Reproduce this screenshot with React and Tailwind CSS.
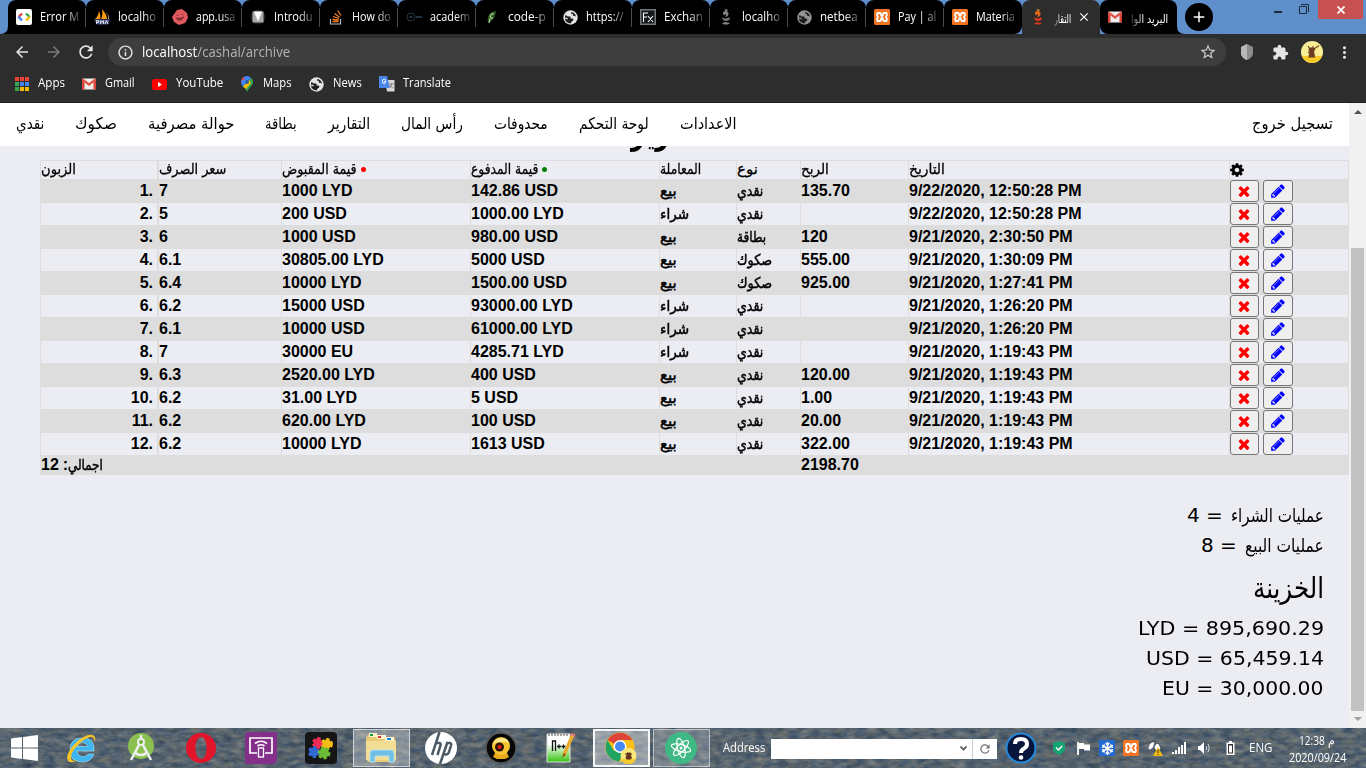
import React, { useLayoutEffect, useRef, useState } from "react";
import { MdArrowBack, MdArrowForward, MdRefresh, MdInfoOutline, MdStarBorder, MdExtension, MdMoreVert, MdClose, MdAdd } from "react-icons/md";
import { FaSnowflake } from "react-icons/fa";

/* Text squeezed or stretched horizontally to a given width. */
function Fit({ w, children, className = "", dir }) {
  const ref = useRef(null);
  const [scale, setScale] = useState(1);
  useLayoutEffect(() => {
    const measure = () => {
      if (ref.current && ref.current.offsetWidth) setScale(w / ref.current.offsetWidth);
    };
    measure();
    if (document.fonts) document.fonts.ready.then(measure);
  }, [w]);
  return (
    <span className={"inline-flex shrink-0 justify-start whitespace-nowrap " + className} style={{ width: w }}>
      <span ref={ref} dir={dir} className="inline-block shrink-0 origin-left whitespace-pre" style={{ transform: `scaleX(${scale})` }}>
        {children}
      </span>
    </span>
  );
}

const CodeIcon = () => (
  <svg viewBox="0 0 16 16" className="h-4 w-4">
    <rect width="16" height="16" rx="2" fill="#fff" />
    <path d="M6 4.5L2.5 8" stroke="#ea4335" strokeWidth="2.4" />
    <path d="M2.3 7.6L6 11.5" stroke="#4285f4" strokeWidth="2.4" />
    <path d="M10 4.5L13.7 8.2" stroke="#34a853" strokeWidth="2.4" />
    <path d="M13.6 7.8L10 11.5" stroke="#fbbc05" strokeWidth="2.4" />
  </svg>
);
const PmaIcon = () => (
  <svg viewBox="0 0 17 16" className="h-4 w-[17px] shrink-0">
    <path d="M1 10Q4 8 5 2Q7 7 6 10z M7 10Q9 6 8 0Q13 6 13 10z" fill="#f89c0e" />
    <path d="M11 3Q15 6 14 10L15 10Q15 5 11 3" fill="#f6c78c" />
    <path d="M0 10.500h16l-2 5H3z" fill="#4c5584" />
    <path d="M2.500 15v-3.500h2v2h-2M6.500 15v-3.500l1.500 2 1.500-2V15M11 15l1.500-3.500L14 15" fill="none" stroke="#d7dae8" strokeWidth="1" />
  </svg>
);
const FaceIcon = () => (
  <svg viewBox="0 0 16 16" className="h-4 w-4">
    <path d="M5 1l5-1 5 4 1 5-3 5-6 2-5-3-2-5z" fill="#e0595f" />
    <path d="M4 9q4 5 8-1q-4 2-8 1M4.500 6.500l2-.5M9.500 5.500l2-.3" fill="#7a2b31" stroke="#7a2b31" strokeWidth=".8" />
  </svg>
);
const IntroIcon = () => (
  <svg viewBox="0 0 16 16" className="h-4 w-4">
    <circle cx="8" cy="8" r="7.500" fill="#222" />
    <path d="M2.500 2.500h11v11h-11z" fill="#a9a9a9" />
    <path d="M4 2.500h8L8 12.500z" fill="#fff" />
  </svg>
);
const StackIcon = () => (
  <svg viewBox="0 0 16 16" className="h-4 w-4">
    <path d="M2.500 10v5h10v-5" fill="none" stroke="#b9bbbd" strokeWidth="1.200" />
    <path d="M4.500 12.500h6M4.500 10.300l6.200.7M5 7.500l6 2M6.500 4.500l5 3.700M9.500 1.500l3.500 5" stroke="#f48024" strokeWidth="1.300" />
  </svg>
);
const AcademyIcon = () => (
  <svg viewBox="0 0 17 16" className="h-4 w-[17px] shrink-0">
    <circle cx="5" cy="8" r="4" fill="none" stroke="#233743" />
    <path d="M3.500 8h3M10 8h6" stroke="#2c4656" strokeWidth="1.500" />
  </svg>
);
const LeafIcon = () => (
  <svg viewBox="0 0 16 16" className="h-4 w-4">
    <path d="M12 2Q5 3 4 8t1 5Q11 11 12 2z" fill="#2d5b1b" />
    <path d="M10 5Q7 4 6.500 7T9 9M5 14l1-4" fill="none" stroke="#a8c79a" strokeWidth="1.300" />
  </svg>
);
const FxIcon = () => (
  <svg viewBox="0 0 16 16" className="h-4 w-4">
    <rect x=".75" y=".75" width="14.500" height="14.500" fill="#15181a" stroke="#70787e" strokeWidth="1.500" />
    <path d="M3.500 13V4H8M3.500 8H7M8 7l5 6M13 7l-5 6" fill="none" stroke="#fff" strokeWidth="1.100" />
  </svg>
);
/* Chrome's default page globe. */
const Globe = ({ color = "#e4e4e4" }) => (
  <svg viewBox="0 0 16 16" className="h-[15px] w-[15px]">
    <circle cx="8" cy="8" r="7.700" fill={color} />
    <path d="M2 8q0-2 1-3 1 2 3 2h2v2h2q1 0 1 1.500T9.500 12L8 14.300Q3 14 2 9l3 1v-1.500zM9 2q4 .8 5 5l-2-1h-1.500V4H8.500z" fill="#1c1c1c" />
  </svg>
);
const FlameIcon = ({ gray }) => (
  <svg viewBox="0 0 16 16" className="h-4 w-4">
    <path d="M5 3l5-2-1 2q2 0 1.500 2T9 7.500L7 8q2-2 1-3L6 6.500Q5 5 5 3z" fill={gray ? "#858585" : "#e86a17"} />
    <path d="M4 8q1.500 2 4 1.500l4-1q0 3-3.500 3.500Q4 12 4 8z" fill={gray ? "#777" : "#e8371e"} />
    <path d="M4 14.500l3-1.500 5 1-2 1.500H6z" fill={gray ? "#858585" : "#c8381c"} />
    <path d="M6.500.5h3L8 2z" fill={gray ? "#ccc" : "#ffb52b"} />
  </svg>
);
const XamppIcon = () => (
  <svg viewBox="0 0 16 16" className="h-4 w-4 shrink-0">
    <rect width="16" height="16" rx="1.500" fill="#f37423" />
    <path d="M3.500 4h2.200Q7 4 7 5.500T8 7q1 0 1-1.500T10.300 4h2.200q1.200 2-.5 4 1.700 2 .5 4h-2.200Q9 12 9 10.500T8 9q-1 0-1 1.500T5.700 12H3.500q-1.200-2 .5-4-1.700-2-.5-4z" fill="none" stroke="#fff" strokeWidth="1.900" strokeLinejoin="round" />
  </svg>
);
const GmailIcon = () => (
  <svg viewBox="0 0 16 16" className="h-4 w-4">
    <rect x="1" y="2.500" width="14" height="11" rx="1" fill="#eee" />
    <path d="M1 13.500V3.500L3.500 5v8.500zM15 13.500V3.500L12.500 5v8.500z" fill="#d94337" />
    <path d="M1 3q0-.5 1-.5L8 7l6-4.500q1 0 1 .5v1.500L8 10 1 4.500z" fill="#e25549" />
  </svg>
);

const tabs = [
  [CodeIcon, "Error M", 39],
  [PmaIcon, "localho", 38],
  [FaceIcon, "app.usa", 39],
  [IntroIcon, "Introdu", 39],
  [StackIcon, "How do", 39],
  [AcademyIcon, "academ", 40],
  [LeafIcon, "code-p", 38],
  [Globe, "https://", 38],
  [FxIcon, "Exchan", 39],
  [() => <FlameIcon gray />, "localho", 38],
  [() => <Globe color="#949494" />, "netbea", 38],
  [XamppIcon, "Pay | al", 38],
  [XamppIcon, "Materia", 39],
];

function TabStrip() {
  return (
    <div className="relative flex h-[34px] shrink-0 bg-[#5f8fcb] pl-2">
      <svg className="absolute bottom-0 left-0 h-2 w-2" viewBox="0 0 8 8"><path d="M8 0v8H0Q8 8 8 0" fill="#000" /></svg>
      {tabs.map(([Icon, text, w], i) => (
        <div key={i} className={"flex h-[34px] w-[78px] shrink-0 bg-black pl-[8px] " + (i === 12 ? "rounded-t-lg rounded-br-lg" : "rounded-t-lg")}>
          <div className="flex h-[34px] w-4 shrink-0 items-center justify-center"><Icon /></div>
          <div className="ml-2 h-[34px] w-10 [mask-image:linear-gradient(to_right,black_62%,rgba(0,0,0,0.2)_100%)]">
            <Fit w={w} className="text-[12.500px] leading-[33px] text-white">{text}</Fit>
          </div>
          {i < 12 && <div className="mt-[8px] ml-auto h-[19px] w-px bg-[#4c4c4c]" />}
        </div>
      ))}
      <div className="flex h-[34px] w-[78px] shrink-0 items-center rounded-t-lg bg-[#2d2d2d] pl-2">
        <FlameIcon />
        <div className="ml-[8px] [mask-image:linear-gradient(to_left,black_62%,rgba(0,0,0,0.2)_100%)]">
          <Fit w={17} dir="rtl" className="font-['DejaVu_Sans'] text-[12px] text-white">التقار</Fit>
        </div>
        <MdClose className="ml-[6px] h-[14px] w-[14px] text-white" />
      </div>
      <div className="flex h-[34px] w-[77px] shrink-0 items-center rounded-t-lg rounded-bl-lg bg-black pl-[7px]">
        <GmailIcon />
        <div className="ml-2 [mask-image:linear-gradient(to_left,black_65%,rgba(0,0,0,0.2)_100%)]">
          <Fit w={37} dir="rtl" className="font-['DejaVu_Sans'] text-[12px] text-white">البريد الوا</Fit>
        </div>
      </div>
      <svg className="mt-[26px] h-2 w-2 shrink-0" viewBox="0 0 8 8"><path d="M0 0v8h8Q0 8 0 0" fill="#000" /></svg>
      <div className="mt-[3px] flex h-7 w-7 shrink-0 items-center justify-center rounded-full bg-black">
        <MdAdd className="h-[18px] w-[18px] text-white" />
      </div>
      <div className="mt-[11px] ml-[61px] h-[2px] w-2 shrink-0 bg-[#1d2a3a]" />
      <svg viewBox="0 0 10 10" className="mt-1 ml-[17px] h-[10px] w-[10px] shrink-0"><path d="M.5 2.500h7v7h-7zM2 .5h7.500V8" fill="none" stroke="#1d2a3a" /></svg>
      <div className="ml-[9px] flex h-[19px] w-[45px] shrink-0 items-center justify-center bg-[#c75050]">
        <svg viewBox="0 0 8 8" className="h-2 w-2"><path d="M.5.5l7 7M7.500.5l-7 7" stroke="#fff" strokeWidth="1.700" /></svg>
      </div>
    </div>
  );
}

function Toolbar() {
  return (
    <div className="flex h-[36px] shrink-0 items-center bg-[#2d2d2d] pl-[13px] text-[#e6e6e6]">
      <MdArrowBack className="h-[18px] w-[18px] shrink-0" />
      <MdArrowForward className="ml-[14px] h-[18px] w-[18px] shrink-0 text-[#7c7c7c]" />
      <MdRefresh className="ml-[13px] h-5 w-5 shrink-0" />
      <div className="ml-3 flex h-7 w-[1118px] shrink-0 items-center rounded-full bg-[#3e3e3e] pl-[9px]">
        <MdInfoOutline className="h-[17px] w-[17px]" />
        <Fit w={148} className="ml-2 text-[14px] leading-7 text-[#b4b4b4]"><span className="text-white">localhost</span>/cashal/archive</Fit>
        <MdStarBorder className="mr-[9px] ml-auto h-[18px] w-[18px] text-[#ccc]" />
      </div>
      <svg viewBox="0 0 14 16" className="ml-[14px] h-4 w-[14px] shrink-0"><path d="M7 0l6 3v7q-1 4-6 6-5-2-6-6V3z" fill="#8c8c8c" /><path d="M7 0v16q-5-2-6-6V3z" fill="#b7b7b7" /></svg>
      <MdExtension className="ml-[18px] h-[17px] w-[17px] shrink-0" />
      <svg viewBox="0 0 22 22" className="ml-[12px] h-[22px] w-[22px] shrink-0">
        <circle cx="11" cy="11" r="11" fill="#f9ee96" />
        <path d="M.8 15h20.400A11 11 0 01.8 15" fill="#f7c928" />
        <path d="M8.500 7h4l1 2-1 1 1 6H8l1-6-1-1zM7 11l2 1M13 8l5-3.500M7 5l2 3M12 5v3" fill="#6c3d22" stroke="#6c3d22" strokeWidth="1.100" />
      </svg>
      <MdMoreVert className="ml-[12px] h-[19px] w-[19px] shrink-0" />
    </div>
  );
}

const gridColors = ["#ea4335", "#ea4335", "#ea4335", "#34a853", "#4285f4", "#4285f4", "#34a853", "#fbbc05", "#fbbc05"];
function Bookmarks() {
  const t = "mt-[-2px] text-[12px] text-white";
  return (
    <div className="flex h-[33px] shrink-0 items-start border-b border-[#1d1d1d] bg-[#2d2d2d] pl-[15px]">
      <div className="flex h-[28px] items-center">
        <div className="grid grid-cols-3 gap-x-[1px] gap-y-[1px]">{gridColors.map((c, i) => <span key={i} className="h-[4px] w-[4px]" style={{ background: c }} />)}</div>
        <Fit w={27} className={"ml-[9px] " + t}>Apps</Fit>
        <div className="ml-4"><GmailIcon /></div>
        <Fit w={30} className={"ml-2 " + t}>Gmail</Fit>
        <svg viewBox="0 0 15 11" className="ml-[17px] h-[11px] w-[15px]"><rect width="15" height="11" rx="2.500" fill="#f00" /><path d="M6 3l4 2.500L6 8z" fill="#fff" /></svg>
        <Fit w={47} className={"ml-[9px] " + t}>YouTube</Fit>
        <svg viewBox="0 0 12 16" className="ml-[18px] h-4 w-3">
          <path d="M6 0a6 6 0 00-6 6q0 2 2 5l8-9Q8.500 0 6 0" fill="#4285f4" />
          <path d="M10.500 2Q12 4 12 6q0 2-3 5.500Q6.500 14 6 16 5.500 13 2 10.500z" fill="#34a853" />
          <path d="M2 10.800L8 4l2 3-5 6z" fill="#fbbc04" /><path d="M0 5l2-4 2 2z" fill="#ea4335" /><circle cx="6" cy="6" r="2" fill="#2a5ba8" />
        </svg>
        <Fit w={29} className={"ml-[10px] " + t}>Maps</Fit>
        <div className="ml-[17px]"><Globe /></div>
        <Fit w={29} className={"ml-[9px] " + t}>News</Fit>
        <svg viewBox="0 0 16 16" className="ml-[17px] h-4 w-4">
          <path d="M6 4h9.500v11.500H8z" fill="#d7d7d7" /><path d="M0 0h8l3 12H0z" fill="#4a86e8" />
          <path d="M7 4.500q-1.500-2-3-.8T4 7t3-1.300H5" fill="none" stroke="#fff" />
          <path d="M10 8h5M12.500 7v1q0 2-2 4M11 9q1 2 3 3" fill="none" stroke="#777" strokeWidth=".8" />
        </svg>
        <Fit w={48} className={"ml-2 " + t}>Translate</Fit>
      </div>
    </div>
  );
}

const navItems = [["نقدي", 28], ["صكوك", 42], ["حوالة مصرفية", 86], ["بطاقة", 32], ["التقارير", 42], ["رأس المال", 62], ["محدوفات", 54], ["لوحة التحكم", 70], ["الاعدادات", 57]];

const rows = [
  ["1.", "7", "1000 LYD", "142.86 USD", "بيع", "نقدي", "135.70", "9/22/2020, 12:50:28 PM"],
  ["2.", "5", "200 USD", "1000.00 LYD", "شراء", "نقدي", "", "9/22/2020, 12:50:28 PM"],
  ["3.", "6", "1000 USD", "980.00 USD", "بيع", "بطاقة", "120", "9/21/2020, 2:30:50 PM"],
  ["4.", "6.1", "30805.00 LYD", "5000 USD", "بيع", "صكوك", "555.00", "9/21/2020, 1:30:09 PM"],
  ["5.", "6.4", "10000 LYD", "1500.00 USD", "بيع", "صكوك", "925.00", "9/21/2020, 1:27:41 PM"],
  ["6.", "6.2", "15000 USD", "93000.00 LYD", "شراء", "نقدي", "", "9/21/2020, 1:26:20 PM"],
  ["7.", "6.1", "10000 USD", "61000.00 LYD", "شراء", "نقدي", "", "9/21/2020, 1:26:20 PM"],
  ["8.", "7", "30000 EU", "4285.71 LYD", "شراء", "نقدي", "", "9/21/2020, 1:19:43 PM"],
  ["9.", "6.3", "2520.00 LYD", "400 USD", "بيع", "نقدي", "120.00", "9/21/2020, 1:19:43 PM"],
  ["10.", "6.2", "31.00 LYD", "5 USD", "بيع", "نقدي", "1.00", "9/21/2020, 1:19:43 PM"],
  ["11.", "6.2", "620.00 LYD", "100 USD", "بيع", "نقدي", "20.00", "9/21/2020, 1:19:43 PM"],
  ["12.", "6.2", "10000 LYD", "1613 USD", "بيع", "نقدي", "322.00", "9/21/2020, 1:19:43 PM"],
];
const arW = { "بيع": 17, "شراء": 29, "نقدي": 26, "بطاقة": 29, "صكوك": 35 };
const Ar = ({ w, children, bold }) => <Fit w={w} dir="rtl" className={"font-['DejaVu_Sans'] text-[15px] font-normal " + (bold ? "[-webkit-text-stroke:0.5px_black]" : "[-webkit-text-stroke:0.3px_black]")}>{children}</Fit>;
const cols = "grid grid-cols-[117px_124px_189px_189px_77px_64px_108px_321px_120px]";
const cell = "border-t border-l border-[#dddddd] whitespace-nowrap leading-[22px]";

const Times = () => <svg viewBox="0 0 1792 1792" className="mr-px h-4 w-4 fill-[#ff0000]"><path d="M1490 1322q0 40-28 68l-136 136q-28 28-68 28t-68-28l-294-294-294 294q-28 28-68 28t-68-28l-136-136q-28-28-28-68t28-68l294-294-294-294q-28-28-28-68t28-68l136-136q28-28 68-28t68 28l294 294 294-294q28-28 68-28t68 28l136 136q28 28 28 68t-28 68l-294 294 294 294q28 28 28 68z" /></svg>;
const Pencil = () => <svg viewBox="0 0 1792 1792" className="h-4 w-4 fill-[#0000ff]"><path d="M491 1536l91-91-235-235-91 91v107h128v128h107zm523-928q0-22-22-22-10 0-17 7l-542 542q-7 7-7 17 0 22 22 22 10 0 17-7l542-542q7-7 7-17zm-54-192l416 416-832 832h-416v-416zm683 96q0 53-37 90l-166 166-416-416 166-165q36-38 90-38 53 0 91 38l235 234q37 39 37 91z" /></svg>;
const Cog = () => <svg viewBox="0 0 1792 1792" className="-ml-px h-4 w-4"><path d="M1152 896q0-106-75-181t-181-75-181 75-75 181 75 181 181 75 181-75 75-181zm512-109v222q0 12-8 23t-20 13l-185 28q-19 54-39 91 35 50 107 138 10 12 10 25t-9 23q-27 37-99 108t-94 71q-12 0-26-9l-138-108q-44 23-91 38-16 136-29 186-7 28-36 28h-222q-14 0-24.500-8.500t-11.500-21.500l-28-184q-49-16-90-37l-141 107q-10 9-25 9-14 0-25-11-126-114-165-168-7-10-7-23 0-12 8-23 15-21 51-66.500t54-70.500q-27-50-41-99l-183-27q-13-2-21-12.500t-8-23.500v-222q0-12 8-23t19-13l186-28q14-46 39-92-40-57-107-138-10-12-10-24 0-10 9-23 26-36 98.500-107.500t94.500-71.500q13 0 26 10l138 107q44-23 91-38 16-136 29-186 7-28 36-28h222q14 0 24.500 8.500t11.500 21.500l28 184q49 16 90 37l142-107q9-9 24-9 13 0 25 10 129 119 165 170 7 8 7 22 0 12-8 23-15 21-51 66.500t-54 70.500q26 50 41 98l183 28q13 2 21 12.500t8 23.500z" /></svg>;

function Table() {
  const head = "border-t border-l border-[#dddddd] flex h-[19px] items-center leading-[16px] pb-[2px]";
  return (
    <div className="ml-10 w-[1309px] shrink-0 text-black font-['Liberation_Sans',Arial,sans-serif] text-[16px] font-bold">
      <div className={cols + " h-[19px]"}>
        <div className={head}><Ar w={35}>الزبون</Ar></div>
        <div className={head + " border-l-2"}><Ar w={67}>سعر الصرف</Ar></div>
        <div className={head}><Ar w={75}>قيمة المقبوض</Ar><i className="mt-[1px] ml-1 h-[5px] w-[5px] rounded-full bg-[#ff0000]" /></div>
        <div className={head}><Ar w={67}>قيمة المدفوع</Ar><i className="mt-[1px] ml-1 h-[5px] w-[5px] rounded-full bg-[#008000]" /></div>
        <div className={head}><Ar w={41}>المعاملة</Ar></div>
        <div className={head}><Ar w={21}>نوع</Ar></div>
        <div className={head}><Ar w={28}>الربح</Ar></div>
        <div className={head}><Ar w={36}>التاريخ</Ar></div>
        <div className={head + " border-r pt-[2px]"}><Cog /></div>
      </div>
      {rows.map((r, i) => (
        <div key={i} className={cols + " h-[23px] " + (i % 2 ? "" : "bg-[#dddddd]")}>
          <div className={cell + " pr-[4px] text-right"}>{r[0]}</div>
          <div className={cell + " border-l-2"}>{r[1]}</div>
          <div className={cell}>{r[2]}</div>
          <div className={cell}>{r[3]}</div>
          <div className={cell}><Ar w={arW[r[4]]} bold>{r[4]}</Ar></div>
          <div className={cell}><Ar w={arW[r[5]]} bold>{r[5]}</Ar></div>
          <div className={cell}>{r[6]}</div>
          <div className={cell}>{r[7]}</div>
          <div className={cell + " flex border-r"}>
            <button className="flex h-[22px] w-[29px] items-center justify-center rounded-[3px] border border-[#767676] bg-[#efefef]"><Times /></button>
            <button className="ml-1 flex h-[22px] w-[30px] items-center justify-center rounded-[3px] border border-[#767676] bg-[#efefef]"><Pencil /></button>
          </div>
        </div>
      ))}
      <div className="grid h-[20px] grid-cols-[760px_1fr] bg-[#dddddd] leading-[20px]">
        <div className="flex pl-px"><span>12</span><span className="ml-1">:</span><Ar w={35} bold>اجمالي</Ar></div>
        <div className="pl-[1px]">2198.70</div>
      </div>
    </div>
  );
}

function Page() {
  return (
    <div className="flex h-[625px] shrink-0 bg-[#ecedf3] text-black">
      <div className="flex w-[1349px] shrink-0 flex-col overflow-hidden">
        <nav className="flex h-[43px] shrink-0 items-center bg-white pr-4 pb-[2px] pl-4">
          <div className="flex gap-[31px]">
            {navItems.map(([t, w]) => <Fit key={t} w={w} dir="rtl" className="font-['DejaVu_Sans'] text-[16px]">{t}</Fit>)}
          </div>
          <Fit w={81} dir="rtl" className="ml-auto font-['DejaVu_Sans'] text-[16px]">تسجيل خروج</Fit>
        </nav>
        <div className="flex h-[14px] shrink-0 items-end overflow-hidden pl-[631px]">
          <Fit w={92} dir="rtl" className="-translate-y-[5px] font-['DejaVu_Sans'] text-[32px] leading-[44px] font-bold">التقارير</Fit>
        </div>
        <Table />
        <div className="mt-[25px] flex flex-col items-end pr-[25px] font-['DejaVu_Sans',Verdana,sans-serif] text-[20px] leading-[30px]">
          <div className="flex"><Fit w={36}>{"4 ="}</Fit><Fit w={93} dir="rtl" className="ml-[8px] text-[19px]">عمليات الشراء</Fit></div>
          <div className="flex"><Fit w={36}>{"8 ="}</Fit><Fit w={79} dir="rtl" className="ml-[8px] text-[19px]">عمليات البيع</Fit></div>
          <div className="mt-[5px] flex h-[48px] items-center pb-[3px]"><Fit w={71} dir="rtl" className="text-[29px]">الخزينة</Fit></div>
          <Fit w={186}>LYD = 895,690.29</Fit>
          <Fit w={178}>USD = 65,459.14</Fit>
          <Fit w={162}>EU = 30,000.00</Fit>
        </div>
      </div>
      <div className="flex w-[17px] shrink-0 flex-col items-center bg-[#f1f1f1]">
        <svg viewBox="0 0 8 4" className="mt-[7px] h-1 w-2"><path d="M0 4l4-4 4 4z" fill="#505050" /></svg>
        <div className="mt-[134px] h-[463px] w-[13px] shrink-0 bg-[#c1c1c1]" />
        <svg viewBox="0 0 8 4" className="mt-[6px] h-1 w-2"><path d="M0 0l4 4 4-4z" fill="#a0a0a0" /></svg>
      </div>
    </div>
  );
}

const Slot = ({ children, box = "" }) => (
  <div className="flex h-10 w-[60px] shrink-0 items-center justify-center"><div className={"flex h-[38px] w-[57px] items-center justify-center " + box}>{children}</div></div>
);

function Taskbar() {
  return (
    <div className="relative h-10 shrink-0 overflow-hidden bg-[#586673]">
      <svg className="absolute inset-0 h-full w-full">
        <filter id="brush" x="0" y="0" width="100%" height="100%" colorInterpolationFilters="sRGB">
          <feTurbulence type="fractalNoise" baseFrequency="0.09 0.2" numOctaves="5" seed="8" />
          <feColorMatrix values=".36 .12 0 0 .1  .26 .14 0 0 .19  .1 .18 0 0 .29  0 0 0 0 1" />
        </filter>
        <rect width="100%" height="100%" filter="url(#brush)" />
      </svg>
      <div className="relative flex h-10 items-center text-white">
        <div className="flex w-[49px] shrink-0 justify-center">
          <svg viewBox="0 0 27 26" className="h-[26px] w-[27px]"><path d="M0 3.500l11-1.500v10.500H0zM12 2l15-2v12.500H12zM0 13.500h11V24L0 22.500zM12 13.500h15V26l-15-2z" fill="#fff" /></svg>
        </div>
        <div className="w-[2px] shrink-0" />
        <Slot>
          <svg viewBox="0 0 32 32" className="h-8 w-8">
            <path d="M29 19H12q1 5.500 6 5.500 3.500 0 5-2.500h6q-3 8-11.500 8Q5 30 5 18T17.500 6Q30 6 29 19zM12 14.500h10.500q-1-4-5-4t-5.500 4" fill="#3db5ef" stroke="#b2e6fb" strokeWidth=".6" />
            <path d="M30 10q2-9-7-7Q14 6 7 15T3 29q3 3 10-1-6 2-7-1-1-6 7-14T26 5q3 0 4 5" fill="#f7c425" />
          </svg>
        </Slot>
        <Slot>
          <svg viewBox="0 0 30 32" className="h-8 w-[30px]">
            <circle cx="15" cy="14" r="13" fill="#8cc152" />
            <path d="M13 13L5 28M17 13l8 15M8 20q7 6 14 0" fill="none" stroke="#eceff1" strokeWidth="2.600" /><circle cx="15" cy="10" r="3" fill="#76ad3c" stroke="#eceff1" strokeWidth="2" /><path d="M15 3v4" stroke="#eceff1" strokeWidth="2.400" />
          </svg>
        </Slot>
        <Slot><svg viewBox="0 0 30 30" className="h-[30px] w-[30px]"><path d="M15 0a15 15 0 100 30 15 15 0 000-30zm0 4c4 0 5.500 6 5.500 11S19 26 15 26 9.500 20 9.500 15 11 4 15 4" fillRule="evenodd" fill="#e3152b" /></svg></Slot>
        <Slot>
          <svg viewBox="0 0 32 32" className="h-8 w-8"><path d="M0 3q0-3 3-3h29v29l-3 3H0z" fill="#84308b" /><path d="M12 21H5V6h22v15h-7M10 11.500q6-4.500 12 0M12.500 14q3.500-2.500 7 0" fill="none" stroke="#fff" strokeWidth="1.700" /><rect x="13.500" y="16" width="5" height="9" fill="#84308b" stroke="#fff" strokeWidth="1.300" /></svg>
        </Slot>
        <Slot>
          <svg viewBox="0 0 32 32" className="h-8 w-8"><rect width="32" height="32" rx="4" fill="#151515" />
            <g strokeWidth="3" strokeDasharray="3 2"><circle cx="13" cy="11" r="4.500" fill="#ef2d55" stroke="#ef2d55" /><circle cx="22" cy="12" r="4.500" fill="#f3bd16" stroke="#f3bd16" /><circle cx="9" cy="20" r="4.500" fill="#3269d4" stroke="#3269d4" /><circle cx="19" cy="21" r="5" fill="#6cbc36" stroke="#6cbc36" /></g></svg>
        </Slot>
        <Slot box="border border-white/60 bg-white/30">
          <svg viewBox="0 0 34 32" className="h-8 w-[34px]">
            <path d="M2 6l2-3h9l2 2h15l2 4v19l-3 2H4l-2-3z" fill="#e9cb76" /><path d="M5 1h8v4H5z" fill="#fff4cc" /><path d="M6 2h3v2H6z" fill="#0a9f3c" /><path d="M13 3h9v4h-9z" fill="#fff4cc" /><path d="M14 4h3v2h-3z" fill="#d33" /><path d="M21 5h9v5h-9z" fill="#fff4cc" /><path d="M23 6h4v2h-4z" fill="#1686db" />
            <path d="M2 9h30v19H2z" fill="#f3dd94" /><path d="M6 30V21q0-3 3-3h18q3 0 3 3v9h-5v-6H11v6z" fill="#70c0e5" stroke="#b5e2f6" />
          </svg>
        </Slot>
        <Slot>
          <svg viewBox="0 0 32 32" className="h-8 w-8"><circle cx="16" cy="16" r="16" fill="#fff" /><path d="M14.500 0L7 23M10.500 11h3.500q2.200 0 1.500 2.500L12.500 23M22.500 10l-7.500 22M21 11h3.500q2.200 0 1.500 2.500l-2 6.500q-.8 2.500-3 2.500h-2" fill="none" stroke="#4b5a66" strokeWidth="2.500" /></svg>
        </Slot>
        <Slot>
          <svg viewBox="0 0 32 32" className="h-8 w-8"><circle cx="16" cy="16" r="15" fill="#050505" stroke="#555" strokeWidth="1.500" /><path d="M10 21h12l2 4-4 2h-8l-4-2z" fill="#e9a91c" /><circle cx="16" cy="14" r="9" fill="#f6c431" /><path d="M8 12q2-6 8-6 7 0 8 5-8-3-16 1" fill="#ffe889" /><circle cx="14.500" cy="15" r="4.500" fill="#2a1607" /><circle cx="14.500" cy="15" r="2" fill="#f31818" /></svg>
        </Slot>
        <Slot>
          <svg viewBox="0 0 30 32" className="h-8 w-[30px]"><defs><linearGradient id="npp" x2="0" y2="1"><stop offset=".35" stopColor="#fff" /><stop offset="1" stopColor="#35c510" /></linearGradient></defs>
            <path d="M1 2h23v28H1z" fill="url(#npp)" stroke="#ddd" /><path d="M2 3h21" stroke="#555" strokeDasharray="2 1" /><path d="M6.500 19V9h3v10M11 14.500h4M13 12.500v4M15.500 14.500h4M17.500 12.500v4" fill="none" stroke="#111" strokeWidth="1.300" /><path d="M27 2.500L17.500 24" stroke="#eaaa2f" strokeWidth="3.500" /><path d="M18 21l-2 5 3.500-3.500z" fill="#5a3b1a" /><path d="M25.500 1l4 1.500-1 2.500-4-2z" fill="#e67878" /></svg>
        </Slot>
        <Slot box="border-2 border-white/90 bg-white/40">
          <svg viewBox="0 0 32 32" className="h-8 w-8">
            <circle cx="15" cy="15" r="14.500" fill="#fbc116" /><path d="M15 15L2.500 8A14.500 14.500 0 0127.500 8H15z" fill="#dc4437" /><path d="M2.500 8A14.500 14.500 0 0014 29.500L20 18 15 15 9 19z" fill="#1da462" /><circle cx="15" cy="14.500" r="6.500" fill="#fff" /><circle cx="15" cy="14.500" r="5" fill="#4587f3" />
            <circle cx="23.500" cy="24" r="8" fill="#f9e879" /><path d="M16 27h15a8 8 0 01-15 0" fill="#f6c92e" /><path d="M22 21h3.500l.5 6h-4.500zM20 22h7M20.500 25.500H27" fill="#66351c" stroke="#66351c" />
          </svg>
        </Slot>
        <Slot box="border border-white/50 bg-white/20">
          <svg viewBox="0 0 32 32" className="h-8 w-8"><circle cx="16" cy="16" r="16" fill="#3fb983" /><g fill="none" stroke="#fff" strokeWidth="1.200"><ellipse cx="16" cy="16" rx="3.500" ry="10" transform="rotate(-15 16 16)" /><ellipse cx="16" cy="16" rx="3.500" ry="10" transform="rotate(45 16 16)" /><ellipse cx="16" cy="16" rx="3.500" ry="10" transform="rotate(105 16 16)" /></g><circle cx="16" cy="16" r="1.500" fill="#fff" /></svg>
        </Slot>
        <Fit w={42} className="ml-[12px] text-[12.500px] text-white">Address</Fit>
        <div className="mt-[1px] ml-[6px] flex h-5 w-[226px] shrink-0 items-center bg-white">
          <svg viewBox="0 0 7 5" className="ml-[189px] h-[5px] w-[7px] shrink-0"><path d="M.5.500l3 3 3-3" fill="none" stroke="#555" strokeWidth="1.700" /></svg>
          <div className="ml-[5px] flex h-5 w-6 items-center justify-center border-l border-[#ccc]"><MdRefresh className="h-[14px] w-[14px] text-[#777]" /></div>
        </div>
        <svg viewBox="0 0 32 32" className="ml-[8px] h-8 w-8 shrink-0"><circle cx="16" cy="16" r="14.500" fill="#08163b" stroke="#2589da" strokeWidth="2" /><path d="M10 12q0-5 6-5t6 5q0 3-3 4.500T16 21" fill="none" stroke="#fff" strokeWidth="4" /><circle cx="16" cy="25.500" r="2.300" fill="#fff" /></svg>
        <div className="ml-[10px] flex w-6 shrink-0 justify-center"><svg viewBox="0 0 12 14" className="h-[14px] w-3"><path d="M6 0l6 2v6q-1 4-6 6-5-2-6-6V2z" fill="#16a374" /><path d="M3 6.500l2.500 2.500L9 5" fill="none" stroke="#fff" strokeWidth="1.300" /></svg></div>
        <div className="flex w-6 shrink-0 justify-center"><svg viewBox="0 0 15 15" className="h-[15px] w-[15px]"><path d="M2 1v13" stroke="#fff" strokeWidth="1.800" /><path d="M3 2h5v1.500h6v6H8V8H3z" fill="#fff" /></svg></div>
        <div className="flex w-6 shrink-0 justify-center"><span className="flex h-4 w-4 items-center justify-center bg-[#246bd1]"><FaSnowflake className="h-[13px] w-[13px]" /></span></div>
        <div className="flex w-6 shrink-0 justify-center"><XamppIcon /></div>
        <div className="flex w-6 shrink-0 justify-center"><svg viewBox="0 0 16 15" className="h-[15px] w-4"><path d="M1 8Q1 3 5 1h3L6 7 3 9zM7 6Q9 1 12 3l2 5-5 2z" fill="#fff" stroke="#333" strokeWidth=".6" /><path d="M11 6l5 9H6z" fill="#f9ba13" /><path d="M11 9v3M11 13v1" stroke="#222" /></svg></div>
        <div className="flex w-6 shrink-0 justify-center"><svg viewBox="0 0 14 12" className="h-3 w-[14px]"><path d="M0 10h2v2H0zM3 8h2v4H3zM6 5h2v7H6zM9 3h2v9H9zM12 0h2v12h-2z" fill="#fff" /></svg></div>
        <div className="flex w-6 shrink-0 justify-center"><svg viewBox="0 0 13 12" className="h-3 w-[13px]"><path d="M1 4h2l4-4v12L3 8H1z" fill="#fff" /><path d="M9 4q1.500 2 0 4M11 2q2.500 4 0 8" fill="none" stroke="#ddd" /></svg></div>
        <div className="flex w-[30px] shrink-0 justify-center"><svg viewBox="0 0 9 14" className="h-[14px] w-[9px]"><path d="M3 0h3v1.500h2.500V14H.5V1.500H3z" fill="#fff" /><path d="M2 3h5v9.500H2z" fill="#333" /><path d="M3 4.500h3v7H3z" fill="#fff" /></svg></div>
        <Fit w={23} className="ml-[4px] text-[12.500px]">ENG</Fit>
        <div className="ml-4 flex w-[58px] shrink-0 flex-col items-center pt-[2px] text-[12.500px] leading-[17px]">
          <div className="flex"><Fit w={26}>12:38</Fit><Fit w={7} className="ml-[3px] font-['DejaVu_Sans']">م</Fit></div>
          <Fit w={57}>2020/09/24</Fit>
        </div>
      </div>
    </div>
  );
}

export default function App() {
  return (
    <div className="flex h-[768px] w-[1366px] flex-col overflow-hidden font-['Open_Sans','Noto_Sans',sans-serif]">
      <TabStrip />
      <Toolbar />
      <Bookmarks />
      <Page />
      <Taskbar />
    </div>
  );
}
